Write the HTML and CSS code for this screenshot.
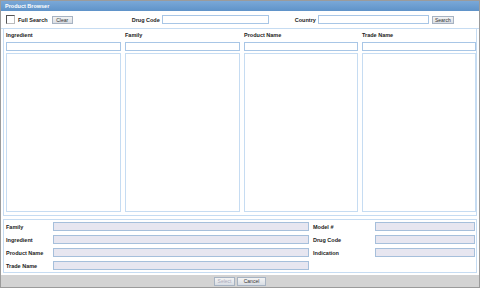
FILE: index.html
```html
<!DOCTYPE html>
<html lang="en">
<head>
  <meta charset="UTF-8">
  <title>Product Browser</title>
  <link rel="stylesheet" href="styles.css">
</head>
<body>
  <div class="window">
    <div class="title-bar">Product Browser</div>
    <div class="toolbar">
      <label class="full-search"><span class="check"></span>Full Search</label>
      <button class="btn clear-btn">Clear</button>
      <span class="tool-label drug-label">Drug Code</span>
      <input class="tool-input drug-input" type="text">
      <span class="tool-label country-label">Country</span>
      <input class="tool-input country-input" type="text">
      <button class="btn search-btn">Search</button>
    </div>
    <div class="browser">
      <div class="col">
        <div class="col-head">Ingredient</div>
        <input class="filter" type="text">
        <div class="list"></div>
      </div>
      <div class="col">
        <div class="col-head">Family</div>
        <input class="filter" type="text">
        <div class="list"></div>
      </div>
      <div class="col">
        <div class="col-head">Product Name</div>
        <input class="filter" type="text">
        <div class="list"></div>
      </div>
      <div class="col">
        <div class="col-head">Trade Name</div>
        <input class="filter" type="text">
        <div class="list"></div>
      </div>
    </div>
    <div class="details">
      <span class="d-label">Family</span>
      <div class="d-field"></div>
      <span class="d-label">Model #</span>
      <div class="d-field"></div>

      <span class="d-label">Ingredient</span>
      <div class="d-field"></div>
      <span class="d-label">Drug Code</span>
      <div class="d-field"></div>

      <span class="d-label">Product Name</span>
      <div class="d-field"></div>
      <span class="d-label">Indication</span>
      <div class="d-field"></div>

      <span class="d-label">Trade Name</span>
      <div class="d-field"></div>
    </div>
    <div class="footer">
      <button class="btn select-btn" disabled>Select</button>
      <button class="btn cancel-btn">Cancel</button>
    </div>
  </div>
</body>
</html>
```

FILE: styles.css
```css
body {
  margin: 0;
  font-family: 'Liberation Sans', Arial, sans-serif;
  color: #222;
  background: #fff;
}
.window {
  width: 480px;
  height: 288px;
  box-sizing: border-box;
  border: 1px solid #9b9b9b;
  display: flex;
  flex-direction: column;
  background: #fff;
}
.title-bar {
  height: 10px;
  line-height: 10px;
  padding-left: 4px;
  background: linear-gradient(#7aa8d8, #5f93c9);
  color: #fff;
  font-size: 5.5px;
  font-weight: bold;
}
.toolbar {
  height: 17px;
  display: flex;
  align-items: center;
  padding-left: 5px;
  border-bottom: 1px solid #c6dcf2;
  font-size: 5.5px;
  font-weight: bold;
}
.full-search {
  display: flex;
  align-items: center;
}
.check {
  width: 7px;
  height: 7px;
  border: 1px solid #555;
  border-right-color: #bbb;
  border-bottom-color: #bbb;
  background: #fff;
  margin-right: 3px;
}
.btn {
  font-family: 'Liberation Sans', Arial, sans-serif;
  font-size: 5px;
  height: 8px;
  padding: 0;
  line-height: 6px;
  border: 1px solid #a7b3c2;
  background: linear-gradient(#f4f4f4, #d8dde4);
  color: #333;
}
.clear-btn {
  margin-left: 4px;
  width: 21px;
}
.tool-label {
  margin-right: 2px;
}
.drug-label {
  margin-left: 59px;
}
.tool-input {
  height: 9px;
  box-sizing: border-box;
  border: 1px solid #a8c6e6;
  padding: 0;
}
.drug-input {
  width: 107px;
}
.country-label {
  margin-left: 26px;
}
.country-input {
  width: 111px;
}
.search-btn {
  margin-left: 3px;
  width: 22px;
}
.browser {
  height: 187px;
  margin: 0 2px;
  box-sizing: border-box;
  border: 1px solid #c6dcf2;
  border-top: none;
  display: grid;
  grid-template-columns: 115px 115px 114px 114px;
  column-gap: 4px;
  padding: 0 2px 3px 2px;
}
.col {
  display: flex;
  flex-direction: column;
}
.col-head {
  height: 13px;
  line-height: 13px;
  font-size: 5.5px;
  font-weight: bold;
}
.filter {
  height: 9px;
  box-sizing: border-box;
  border: 1px solid #a8c6e6;
  padding: 0;
  margin: 0 0 2px 0;
}
.list {
  flex: 1;
  border: 1px solid #c6dcf2;
  background: #fff;
}
.details {
  margin: 3px 2px 0 2px;
  height: 54px;
  box-sizing: border-box;
  border: 1px solid #c6dcf2;
  padding: 2px 2px 0 2px;
  display: grid;
  grid-template-columns: 47px 256px 66px 100px;
  grid-auto-rows: 13px;
  font-size: 5.5px;
  font-weight: bold;
}
.d-label {
  line-height: 10px;
}
.details .d-label:nth-child(4n+3) {
  padding-left: 4px;
}
.d-field {
  height: 9px;
  box-sizing: border-box;
  border: 1px solid #a6bfdb;
  background: #e7e6f0;
}
.footer {
  flex: 1;
  margin-top: 2px;
  background: #d3d3d3;
  display: flex;
  justify-content: center;
  align-items: center;
  gap: 2px;
}
.select-btn {
  height: 9px;
  width: 21px;
}
.cancel-btn {
  height: 9px;
  width: 29px;
}
.select-btn:disabled {
  color: #aab;
}
```
